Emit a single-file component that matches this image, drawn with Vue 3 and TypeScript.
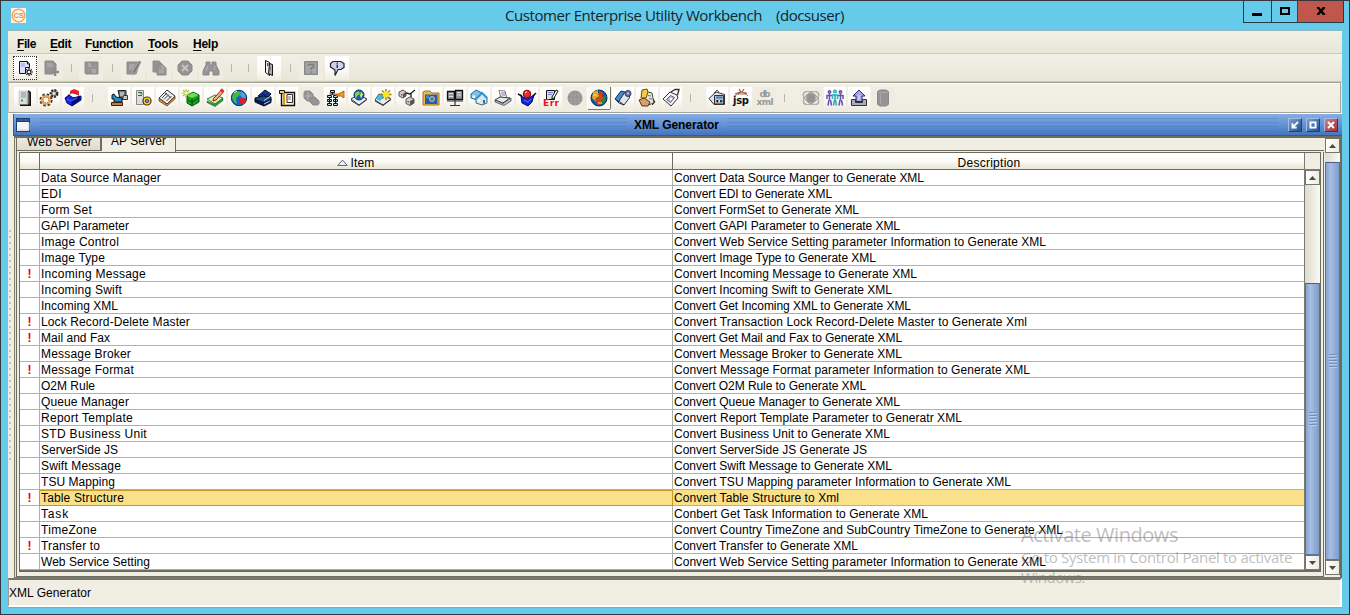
<script setup lang="ts">
interface Row { item: string; iw: number; desc: string; dw: number; flag?: boolean; selected?: boolean }
interface Tool { icon?: string; sep?: number; off?: boolean; pressed?: boolean; focus?: boolean; gap?: number }

// Spreads the letters of an element so that its text takes the given width.
const vFit = {
  mounted(el: HTMLElement, binding: { value: number }) {
    const natural = el.getBoundingClientRect().width
    const count = (el.textContent ?? '').length
    if (count) el.style.letterSpacing = `${((binding.value - natural) / count).toFixed(3)}px`
  },
}

const caption = 'Customer Enterprise Utility Workbench\u00a0\u00a0\u00a0\u00a0(docsuser)'

const r = (item: string, iw: number, desc: string, dw: number, flag = false, selected = false): Row =>
  ({ item, iw, desc, dw, flag, selected })

const rows: Row[] = [
  r('Data Source Manager', 120, 'Convert Data Source Manger to Generate XML', 250),
  r('EDI', 21, 'Convert EDI to Generate XML', 158),
  r('Form Set', 51, 'Convert FormSet to Generate XML', 185),
  r('GAPI Parameter', 88, 'Convert GAPI Parameter to Generate XML', 226),
  r('Image Control', 78, 'Convert Web Service Setting parameter Information to Generate XML', 372),
  r('Image Type', 64, 'Convert Image Type to Generate XML', 202),
  r('Incoming Message', 105, 'Convert Incoming Message to Generate XML', 243, true),
  r('Incoming Swift', 81, 'Convert Incoming Swift to Generate XML', 218),
  r('Incoming XML', 77, 'Convert Get Incoming XML to Generate XML', 237),
  r('Lock Record-Delete Master', 149, 'Convert Transaction Lock Record-Delete Master to Generate Xml', 353, true),
  r('Mail and Fax', 69, 'Convert Get Mail and Fax to Generate XML', 228, true),
  r('Message Broker', 90, 'Convert Message Broker to Generate XML', 228),
  r('Message Format', 93, 'Convert Message Format parameter Information to Generate XML', 356, true),
  r('O2M Rule', 54, 'Convert O2M Rule to Generate XML', 192),
  r('Queue Manager', 88, 'Convert Queue Manager to Generate XML', 226),
  r('Report Template', 92, 'Convert Report Template Parameter to Generatr XML', 288),
  r('STD Business Unit', 106, 'Convert Business Unit to Generate XML', 216),
  r('ServerSide JS', 77, 'Convert ServerSide JS Generate JS', 193),
  r('Swift Message', 80, 'Convert Swift Message to Generate XML', 218),
  r('TSU Mapping', 74, 'Convert TSU Mapping parameter Information to Generate XML', 337),
  r('Table Structure', 83, 'Convert Table Structure to Xml', 165, true, true),
  r('Task', 28, 'Conbert Get Task Information to Generate XML', 254),
  r('TimeZone', 56, 'Convert Country TimeZone and SubCountry TimeZone to Generate XML', 389),
  r('Transfer to', 59, 'Convert Transfer to Generate XML', 184, true),
  r('Web Service Setting', 109, 'Convert Web Service Setting parameter Information to Generate XML', 372),
]

const menus = [
  { a: '', k: 'F', b: 'ile', w: 19 },
  { a: '', k: 'E', b: 'dit', w: 21 },
  { a: 'F', k: 'u', b: 'nction', w: 48 },
  { a: '', k: 'T', b: 'ools', w: 30 },
  { a: '', k: 'H', b: 'elp', w: 25 },
]

const icons: Record<string, string> = {
  newDoc: '<path d="M5.500 4.500h8l2 2v4h-4v6h-6z" fill="#dfe0fb" stroke="#111"/><path d="M13.500 4.500v2.500h2" fill="#fff" stroke="#111"/><path d="M7 6h4v4H7z" fill="#b9baf0"/><path d="M15 11v8M11 15h8M12.300 12.300l5.500 5.500M17.800 12.300l-5.500 5.500" stroke="#111" stroke-width="1.200" fill="none"/><circle cx="15" cy="15" r="1.200" fill="#fff"/>',
  addDoc: '<path d="M5 4h8l3 3v6h-3v4H5z"/><path d="M15 11v8M11 15h8" stroke-width="2.500"/><path d="M7 7h5M7 9h6" class="l"/>',
  save: '<path d="M5 5h13v12H6l-1-1z"/><path d="M8 6h7v4H8zM8 12h8v4H8z" fill="#aaa"/><path d="M12 6h2v3h-2zM9 13h2v3H9z"/>',
  edit: '<path d="M5 5h12v3l-3 9H5z"/><path d="M17 4l2 1-6 11-3 2 1-4z" fill="#777" stroke="#aaa"/><path d="M7 8h6M7 10h5M7 12h4" class="l"/>',
  copy: '<path d="M5 4h6l3 3v8H5z" stroke="#777"/><path d="M9 7h5l4 4v7H9z" stroke="#777"/><path d="M14 8v3h3M11 13h5M11 15h5" class="l"/>',
  cancel: '<path d="M8 4h6l4 4v6l-4 4H8l-4-4V8z"/><path d="M8 8l6 6M14 8l-6 6" stroke="#c4c4c0" stroke-width="2" fill="none"/>',
  find: '<path d="M6 8V5h4v3h2V5h4v3l3 6v4h-6v-4h-4v4H3v-4z" stroke="#858585"/><path d="M6 14l2-5M14 13l1-4" class="l"/>',
  exit: '<path d="M7.500 3.500l4 2v13l-4-3z" fill="#eee" stroke="#111"/><path d="M11.500 6.500l3 1v11l-4-2z" fill="#aaa" stroke="#111"/><path d="M9 6h1.500v3H9z" fill="#555"/><path d="M11 10h1.500v3H11z" fill="#c22"/>',
  help: '<path d="M4.500 4.500h13v13h-13z" fill="#999" stroke="#888"/><path d="M6 6h10v10H6z" fill="#a6a6a6"/><path d="M8.500 9V7.500h5V10L11 11.500V13M11 14.500V16" fill="none" stroke="#7d7d7d" stroke-width="1.500"/>',
  about: '<path d="M7 4.500h8l3 2v4l-3 2h-3l-3 6v-5.500L4.500 10V6.500z" fill="#cfd1ef" stroke="#222" stroke-width="1.200"/><path d="M10.500 5.500h1.500v1.200h-1.500zM10.500 7.500H12V11h-1.500z" fill="#345"/>',

  server: '<path d="M5 4h8v14H5z" fill="#dedede" stroke="#bbb" stroke-width=".6"/><path d="M14 3l3 2v14H6v-1.500h8z" fill="#111"/><path d="M13.500 4l2 1.500v11l-2 1.500z" fill="#666"/><path d="M7 6h5M7 8h5M7 10h5" stroke="#8d8d8d"/><path d="M7 12.500h2v2H7z" fill="#1b3"/>',
  gears: '<circle cx="8" cy="13" r="4.600" fill="none" stroke="#5b3514" stroke-width="4" stroke-dasharray="2.100 1.510"/><circle cx="8" cy="13" r="4" fill="none" stroke="#e9a652" stroke-width="2.200"/><circle cx="16" cy="6.500" r="3.200" fill="#aaa" stroke="#333" stroke-width="2.500" stroke-dasharray="2 1"/><circle cx="16" cy="6.500" r="1.200" fill="#eee"/>',
  blueBox: '<path d="M8 4l4-2 5 2v4l-3 2-6-3z" fill="#ed1f24"/><path d="M6 8l4-2 7 2-2 3-5-1z" fill="#fff" stroke="#333" stroke-width=".5"/><path d="M3 11l4-3 4 3 4-1 4-1v4l-9 6-5-3z" fill="#1726e5" stroke="#030c60"/><path d="M9.500 13.500L18 9v4l-8.500 6z" fill="#030b77"/><path d="M5 12l4 2 6-3" stroke="#4f6cff" fill="none"/>',
  desk: '<path d="M10 3.500h8v8h-6z" fill="#6e7478" stroke="#222"/><path d="M12 5h4v4h-4z" fill="#aeb7b9"/><path d="M15.500 8.500h4v4h-5z" fill="#ccc" stroke="#333"/><path d="M4 8l2-1 2 3 6 1v4H6v-3H4z" fill="#258bc1" stroke="#112"/><path d="M3.500 15.500h11v3h-11z" fill="#c17e43" stroke="#3f200c"/>',
  serverCog: '<path d="M4.500 3.500h7v14h-7z" fill="#dcdcdc" stroke="#888"/><path d="M6 5.500h4M6 8.500h4" stroke="#555"/><path d="M8.500 6h2v1.500h-2z" fill="#0c3"/><circle cx="15" cy="14" r="4" fill="#ffe925" stroke="#55220a" stroke-width="1.200"/><circle cx="15" cy="14" r="1.800" fill="#fff" stroke="#335"/><path d="M14.500 13h1v2h-1z" fill="#11a"/>',
  papers: '<path d="M3 11l8-8 8 6-8 8z" fill="#eee" stroke="#333"/><path d="M3 11.500l8 6 8-8V12l-8 7-8-5z" fill="#e9a13d" stroke="#5b4327" stroke-width=".8"/><path d="M6 11l5-5M8 12.500l5-5M10.500 14l5-5M9 6l6 5" stroke="#4c4c4c"/>',
  greenCube: '<path d="M7 9l6-4 6 3v7l-7 4-5-3z" fill="#14a51b" stroke="#034c16"/><path d="M7.500 9L13 5.500 18.500 8 12 11z" fill="#6be057"/><path d="M12 11.500v7M8 13l4 2 7-4" stroke="#034c16" fill="none"/><path d="M6 2v9M1.500 6h9M3 3l6 6M9 3L3 9" stroke="#a9c926" stroke-width="1.200"/><circle cx="6" cy="6" r="1.500" fill="#fff"/>',
  greenPad: '<path d="M3 12l8-4 8 3-8 6z" fill="#d1efbb" stroke="#487b32"/><path d="M3 14l8 3.500 8-6v2l-8 6-8-4z" fill="#2ba235" stroke="#1a5c20" stroke-width=".6"/><path d="M9.500 11.500L17 3.500l2 2-7 7.500-3 1z" fill="#f3b077" stroke="#aa1818"/><path d="M16 3l2-1.500 2.500 2.500-2 2z" fill="#e6242c"/>',
  globe: '<circle cx="11" cy="11" r="7.700" fill="#1262c9" stroke="#063676"/><path d="M5 7l4-3 4 1-2 4-3 2 1 6-3-2-2-4z" fill="#42b947"/><path d="M13 4l4 3 1 4-3 1-3-4z" fill="#4f9fe2"/><circle cx="14.500" cy="14" r="3.200" fill="#d92127"/><path d="M6 6l3-2" stroke="#e4ed9d"/>',
  books: '<path d="M6 9l7-6 6 4-6 6z" fill="#18358d" stroke="#040c36"/><path d="M3 11l8-2 8 1v3l-7 3-9-3z" fill="#1f4b86" stroke="#041028"/><path d="M3 12.500l9 3.500 7-4v3.500L12 19l-9-4z" fill="#0a1d5c" stroke="#020927"/><path d="M12 13.500l6-4M12 17l6-3" stroke="#bcd1ed" fill="none"/><path d="M10 6l5 4" stroke="#0a1644"/>',
  ledger: '<path d="M5.500 5.500h13v13h-13z" fill="#fff4c6" stroke="#111" stroke-width="1.400"/><path d="M3.500 3.500h5v3h-5z" fill="#eed66a" stroke="#111"/><path d="M7 6h2v12H7z" fill="#d89a18"/><path d="M11 7.500h5.500v8H11z" fill="#fff" stroke="#333"/><path d="M12 10h3M12 12h3" stroke="#777"/>',
  link: '<path d="M5 4h5l3 3v5l-3 2H7l-3-3V6z" stroke="#858585"/><path d="M12 10h3l4 4v3l-2 1h-4l-3-3v-4z" stroke="#858585"/><path d="M8 5v8M5 9h7" class="l"/>',
  tree: '<path d="M6.500 3.500h4v2h-4zM3.500 8.500h4v2h-4zM9.500 8.500h4v2h-4zM3.500 12.500h4v2h-4zM9.500 12.500h4v2h-4zM3.500 16.500h4v2h-4zM9.500 16.500h4v2h-4z" fill="#b4e0de" stroke="#111"/><path d="M8.500 6v2M5.500 7h6M5.500 10v7M11.500 10v7" stroke="#111" fill="none"/><path d="M12 7h3l1-1 4-2v7l-3-2h-5z" fill="#f29a22" stroke="#a54d08" stroke-width=".8"/>',
  globePad: '<path d="M3 12l5-3 7 1 4 2-8 6z" fill="#edf0ef" stroke="#334"/><path d="M3 13.500l8 5 8-6" stroke="#345" fill="none"/><circle cx="11" cy="8" r="5" fill="#1b60c5" stroke="#0a355e"/><path d="M7 6l4-2 1 3-3 2-1 3-1-2z" fill="#7bd33d"/><path d="M13 4.500l2 3-2 4-1-3z" fill="#e6e04c"/>',
  starPad: '<path d="M3 13l4-6 12 5-8 6z" fill="#e8ebed" stroke="#345"/><path d="M4 12l5-6 4 3-5 5z" fill="#45b9ea"/><path d="M3 14l8 4.500 8-6" stroke="#334" fill="none"/><path d="M14 2v11M8.500 7.500h11M10 3.500l8 8M18 3.500l-8 8" stroke="#8a7c00" stroke-width="1.300"/><circle cx="14" cy="7.500" r="3.200" fill="#ffe424"/>',
  boxes: '<path d="M3 5l4-2 3 2v4L7 11 3 9zM10 12l4-2 4 2v4l-4 2.500-4-2z" fill="#ccc" stroke="#555"/><path d="M10 6l4 1 5-4M15 6v4" stroke="#222" fill="none" stroke-width="1.300"/><path d="M7 7l3-2v4l-3 2zM14 14l4-2v4l-4 2.500z" fill="#555"/><path d="M5 7h1.500v1.500H5zM11.500 14H13v1.500h-1.500z" fill="#e32"/>',
  folder: '<path d="M3 7V5l2-1h5l2 2h7v12H3z" fill="#edb94c" stroke="#a6701c"/><path d="M5 7.500h12.500V17H5z" fill="#235fae"/><path d="M6 8.500h3v3H6z" fill="#4989c9"/><circle cx="12" cy="12" r="2.400" fill="#3975bd" stroke="#f1d675"/>',
  monitors: '<path d="M3.500 4.500h7v8h-7zM11.500 3.500h7v9h-7z" fill="#999" stroke="#111" stroke-width="1.300"/><path d="M5 6.500h4M5 9.500h4M13 5.500h4M13 8h4" stroke="#ddd"/><path d="M3 14h16M11 12v6M6 18.500h10" stroke="#333" stroke-width="1.200"/>',
  houses: '<path d="M3 7l5-4 6 3v4l-5 3-6-2z" fill="#7fc3ea" stroke="#29699b"/><path d="M8 12l6-6 5 4v6l-5 2-6-2z" fill="#d6e7f0" stroke="#416882"/><path d="M8 12l6-6 5 5" stroke="#3296d0" stroke-width="2" fill="none"/><path d="M4.500 8.500h2.500V11H4.500zM10 12.500h2v2h-2z" fill="#fff"/><path d="M15 13h2v3.500h-2z" fill="#38697f"/>',
  printer: '<path d="M7 3.500l6 .5 2 8-6-1z" fill="#fff" stroke="#777"/><path d="M3 13l5-3 10 1-7 5z" fill="#e7e7f2" stroke="#333"/><path d="M3 13l8 3.500 8-5.500v3l-7 4.500L3 15z" fill="#c4c4d0" stroke="#333" stroke-width=".7"/><path d="M9 6h4M9.500 8h4" stroke="#7b70b0"/>',
  ballBox: '<path d="M5 9l6 3 7-4-2 7-4 4-6-3z" fill="#1427cf" stroke="#050d66"/><path d="M2 7l4 2M17 9l3-3" stroke="#111" stroke-width="1.500"/><circle cx="11" cy="7" r="3.800" fill="#ed2929" stroke="#78070a"/><path d="M9 6l2-1.500" stroke="#fff"/><path d="M8 13l4 2 3-3" stroke="#597bff" fill="none"/>',
  err: '<path d="M6.500 3.500h8v9h-8z" fill="#ddd" stroke="#111"/><path d="M8 5.500h5M8 7.500h4" stroke="#7682ce"/><path d="M12 10l4-7 2 1-4 7-2 1z" fill="#fff" stroke="#111"/>',
  disc: '<circle cx="11" cy="11" r="7.500"/><path d="M7 5v12M11 4v14M15 5v12M4 8h14M4 12h14M5 15h12" class="l" opacity=".35"/>',
  xmlGlobe: '<circle cx="11" cy="11" r="8" fill="#1258ac" stroke="#092f60"/><path d="M5 5l5-2v3l4 1-2 5-3-2-1 5-4-4z" fill="#e7a719"/><path d="M12 4l4 3-4 3-2-3z" fill="#d33b1a"/><path d="M14 10l4-1-1 6-4 3-2-3z" fill="#27872f"/><path d="M8 11l5-3 3 3-3 2 1 3-4 2-3-5z" fill="#c94a18"/><path d="M10 16h4M5 8h4" stroke="#ffe05a"/>',
  tape: '<path d="M3 12l6-8 4 1-6 10z" fill="#3d8ccc" stroke="#102a46"/><path d="M7 14l6-9 5 5-6 8z" fill="#dfe6ee" stroke="#334"/><circle cx="16" cy="6.500" r="3" fill="#6575ad" stroke="#343960"/><circle cx="16" cy="6.500" r="1" fill="#c8d0ee"/><path d="M3 12l4 4 5 2" stroke="#102a46" fill="none"/>',
  handDoc: '<path d="M8 4l8 2 2 10-6 2-4-6z" fill="#e5e5dc" stroke="#4b4b34"/><path d="M6 3l5-1 1 3-2 6H5z" fill="#f3cf3c" stroke="#684e12"/><path d="M3 13l5-2 6 4-2 4H6z" fill="#d9a06c" stroke="#57331b"/><path d="M12 8.500l3 .5M13 11.500l3 .5" stroke="#777"/><path d="M17 12l2 3-3 3" stroke="#222" fill="none"/>',
  tag: '<path d="M3 12l7-7 7 3 1 3-7 8z" fill="#f4f4fb" stroke="#333"/><path d="M11 5l4-2.500h4L17.500 8" fill="none" stroke="#333" stroke-width="1.300"/><path d="M6.500 12.500l4-4 4 2-4 5z" fill="#b8b9dc" stroke="#667"/><circle cx="11" cy="12" r="1.200" fill="#fff"/>',
  webHouse: '<path d="M3 11.500L10 5l8.500 2.500v10H8z" fill="#dfe5ea" stroke="#333"/><path d="M8.500 8.500h9v8.500h-9z" fill="#b7c3ce" stroke="#333"/><path d="M10 9.500h6.500v2H10z" fill="#387ed0"/><path d="M10 14h6.500M11.500 13v2.500M15 13v2.500" stroke="#111" stroke-width="1.200"/><path d="M12.500 13H14v2h-1.500z" fill="#ffe349"/><path d="M8 6l3-3 2 2" stroke="#555" fill="none"/>',
  jsp: '<path d="M9 2l2 3-3 2M14 2l-2 3 4 2M5 7l5-2 7 1" stroke="#a8584c" fill="none" stroke-width="1.200"/><path d="M4 9l4-2h8l2 2" fill="none" stroke="#977"/>',
  dbxml: '',
  atom: '<circle cx="11" cy="11" r="4.800"/><ellipse cx="11" cy="11" rx="9" ry="5" transform="rotate(35 11 11)" fill="none" stroke="#9b9b98"/><ellipse cx="11" cy="11" rx="9" ry="5" transform="rotate(-35 11 11)" fill="none" stroke="#9b9b98"/><rect x="3.500" y="4.500" width="15" height="13" rx="4" fill="none" stroke="#b4b4ae"/>',
  people: '<g fill="none" stroke="#6650b0" stroke-width="1.500"><circle cx="5.500" cy="5" r="1.200"/><path d="M5.500 7v6M3 12V8.500h5M5 13l-1 5.500M6.500 13l1 5.500"/><circle cx="16.500" cy="5" r="1.200"/><path d="M16.500 7v6M19 12V8.500h-5M16 13l-1 5.500M17.500 13l1 5.500"/></g><g fill="none" stroke="#35aebb" stroke-width="1.600"><circle cx="11" cy="4.500" r="1.300"/><path d="M11 7v6M8.500 12V8h5v4M10.500 13l-1 5.500M11.500 13l1 5.500"/></g>',
  upload: '<path d="M3.500 12.500h4v3h7v-3h4v6h-15z" fill="#a8adbb" stroke="#333"/><path d="M11 3l6 6h-3v5.500H8V9H5z" fill="#a6a7e9" stroke="#292966"/><path d="M10 8h2v5h-2z" fill="#c8c8fa"/>',
  can: '<path d="M5.500 4.500L8 3h6l2.500 1.500v13L14 19H8l-2.500-1.500z" stroke="#858585"/><path d="M6.500 5.500h9M8.500 7v10" class="l" opacity=".6"/>',
}

const t = (icon: string, opts: Partial<Tool> = {}): Tool => ({ icon, ...opts })
const topTools: Tool[] = [
  t('newDoc', { focus: true }), t('addDoc', { off: true, gap: 2 }), { sep: 16 }, t('save', { off: true }), { sep: 18 },
  t('edit', { off: true }), t('copy', { off: true, gap: 2 }), t('cancel', { off: true, gap: 2 }), t('find', { off: true, gap: 2 }),
  { sep: 16 }, { sep: 18 }, t('exit'), { sep: 18 }, t('help', { off: true }), t('about', { gap: 2 }),
]
const mainTools: Tool[] = [
  ...['server', 'gears', 'blueBox'].map((n) => t(n)), { sep: 20 },
  ...['desk', 'serverCog', 'papers', 'greenCube', 'greenPad', 'globe', 'books', 'ledger'].map((n) => t(n)),
  t('link', { off: true }),
  ...['tree', 'globePad', 'starPad', 'boxes', 'folder', 'monitors', 'houses', 'printer', 'ballBox', 'err'].map((n) => t(n)),
  t('disc', { off: true }), t('xmlGlobe', { pressed: true }), t('tape'), t('handDoc'), t('tag'), { sep: 20 },
  t('webHouse'), t('jsp'), t('dbxml', { off: true }), { sep: 20 },
  t('atom', { off: true }), t('people'), t('upload'), t('can', { off: true }),
]
</script>

<template>
  <div class="window">
    <header class="title">
      <svg class="logo" viewBox="0 0 15 15"><rect width="15" height="15" fill="#fdf3e4"/><circle cx="7.500" cy="7.500" r="6.300" fill="#fff6e9" stroke="#f2a55f" stroke-width="1.500"/><text x="7.600" y="10.200" text-anchor="middle" font-size="7.500" font-weight="bold" fill="#ee8b38">CS</text></svg>
      <div class="caption"><span v-fit="339">{{ caption }}</span></div>
      <div class="controls">
        <div class="ctl min"><svg viewBox="0 0 10 10"><path d="M0 6h10v3H0z"/></svg></div>
        <div class="ctl max"><svg viewBox="0 0 10 8"><path d="M1 1h8v6H1z" fill="none" stroke="#000" stroke-width="2"/></svg></div>
        <div class="ctl close"><svg viewBox="0 0 10 8"><path d="M1.500 0L8.500 8M8.500 0L1.500 8" stroke="#000" stroke-width="2.400"/></svg></div>
      </div>
    </header>

    <main class="client">
      <nav class="menu">
        <span v-for="m in menus" :key="m.k" v-fit="m.w">{{ m.a }}<u>{{ m.k }}</u>{{ m.b }}</span>
      </nav>

      <div class="bar first">
        <template v-for="(tool, i) in topTools" :key="i">
          <i v-if="tool.sep" class="sep" :style="{ width: tool.sep + 'px' }"></i>
          <span v-else class="tool" :class="{ off: tool.off, focus: tool.focus, spaced: tool.gap }">
            <svg viewBox="0 0 22 22" v-html="icons[tool.icon!]"></svg>
          </span>
        </template>
      </div>

      <div class="bar second">
        <template v-for="(tool, i) in mainTools" :key="i">
          <i v-if="tool.sep" class="sep" :style="{ width: tool.sep + 'px' }"></i>
          <span v-else class="tool" :class="{ off: tool.off, pressed: tool.pressed }">
            <svg viewBox="0 0 22 22">
              <g v-html="icons[tool.icon!]"></g>
              <text v-if="tool.icon === 'jsp'" x="11" y="17" class="glyph" textLength="16">jsp</text>
              <text v-if="tool.icon === 'err'" x="11" y="19" class="glyph red-text" textLength="16">Err</text>
              <template v-if="tool.icon === 'dbxml'">
                <text x="11" y="9.500" class="glyph grey" textLength="11">db</text>
                <text x="11" y="18" class="glyph grey" textLength="17">xml</text>
              </template>
            </svg>
          </span>
        </template>
      </div>

      <div class="work">
        <div class="splitter"><i></i></div>
        <section class="frame">
          <div class="frame-title">
            <svg class="frame-icon" viewBox="0 0 14 14"><rect width="14" height="14" fill="#173d7c"/><rect x="1" y="4" width="12" height="9" fill="#f5f5f5"/><path d="M1 1h12v2H1z" fill="#355b95"/><path d="M2 12h11V5" fill="none" stroke="#c9c9c9"/></svg>
            <i class="ridge wide"></i>
            <b v-fit="85">XML Generator</b>
            <i class="ridge"></i>
            <span class="fbtn"><svg viewBox="0 0 14 14"><path d="M10.500 3.500L4.500 9.500M4 5v5h5" /></svg></span>
            <span class="fbtn"><svg viewBox="0 0 14 14"><path d="M4 4h6v6H4z" /></svg></span>
            <span class="fbtn red"><svg viewBox="0 0 14 14"><path d="M3.500 3.500l7 7M10.500 3.500l-7 7" /></svg></span>
          </div>

          <div class="frame-body">
            <div class="pane">
              <div class="tabs">
                <div class="tab"><span v-fit="65">Web Server</span></div>
                <div class="tab active"><span v-fit="55">AP Server</span></div>
                <div class="tab-rest"></div>
              </div>
              <div class="tab-page">
                <div class="grid-box">
                  <div class="table">
                    <div class="row head">
                      <div class="cell"></div>
                      <div class="cell"><svg class="sort" viewBox="0 0 11 7"><path d="M.8 6.500L5.500 1l4.700 5.500z" fill="#eef" stroke="#667" /></svg><span v-fit="24">Item</span></div>
                      <div class="cell"><span v-fit="63">Description</span></div>
                    </div>
                    <div v-for="row in rows" :key="row.item" class="row" :class="{ selected: row.selected }">
                      <div class="cell mark"><b v-if="row.flag">!</b></div>
                      <div class="cell item"><span v-fit="row.iw">{{ row.item }}</span></div>
                      <div class="cell desc"><span v-fit="row.dw">{{ row.desc }}</span></div>
                    </div>
                  </div>
                  <div class="scroll inner">
                    <div class="corner"></div>
                    <div class="arrow"><svg viewBox="0 0 7 4"><path d="M0 4L3.500 0 7 4z"/></svg></div>
                    <div class="track"></div>
                    <div class="thumb"><i></i></div>
                    <div class="arrow"><svg viewBox="0 0 7 4"><path d="M0 0h7L3.500 4z"/></svg></div>
                  </div>
                </div>
              </div>
            </div>
            <div class="scroll outer">
              <div class="arrow"><svg viewBox="0 0 7 4"><path d="M0 4L3.500 0 7 4z"/></svg></div>
              <div class="track"></div>
              <div class="thumb"><i></i></div>
              <div class="arrow"><svg viewBox="0 0 7 4"><path d="M0 0h7L3.500 4z"/></svg></div>
            </div>
          </div>
        </section>
      </div>

      <footer class="status"><span v-fit="82">XML Generator</span></footer>
    </main>

    <div class="watermark">
      <div class="big"><span v-fit="157">Activate Windows</span></div>
      <div><span v-fit="271">Go to System in Control Panel to activate</span></div>
      <div><span v-fit="64">Windows.</span></div>
    </div>
  </div>
</template>

<style>
body { margin: 0; overflow: hidden; }
</style>

<style scoped>
* { box-sizing: border-box; }
.window {
  position: relative; width: 1350px; height: 615px; padding: 0 7px 6px;
  border: 1px solid #35373a; background: #66caea; display: flex; flex-direction: column;
  font: 12px/15px "Liberation Sans", Arial, sans-serif; color: #000;
}
span, b { display: inline-block; flex: none; white-space: pre; }
svg { display: block; }

.title { height: 29px; display: flex; align-items: flex-start; }
.logo { width: 15px; height: 15px; margin: 7px 0 0 3px; }
.caption { flex: 1; padding: 4px 0 0 479px; font: 15px/21px "Open Sans", "Noto Sans", sans-serif; color: #10272e; }
.controls { display: flex; margin: -1px -2px 0 0; height: 23px; border: 1px solid #253c47; border-top-color: #35373a; }
.ctl { display: flex; align-items: center; justify-content: center; height: 21px; }
.ctl svg { width: 10px; height: 8px; margin-top: -1px; }
.min { width: 28px; border-right: 1px solid #253c47; }
.min svg { height: 10px; margin: 0 1px 0 0; }
.max { width: 26px; border-right: 1px solid #4d3d40; }
.close { width: 45px; background: #c1564c; }

.client { flex: 1; display: flex; flex-direction: column; background: #f0eee2; border-top: 1px solid #8fb4bc; border-bottom: 1px solid #9aa09c; min-height: 0; }
.menu { height: 23px; flex: none; display: flex; gap: 15px; padding: 6px 0 0 9px; font-weight: bold; background: linear-gradient(#f0f0e5, #e9e7d7); border-bottom: 1px solid #cccabf; }
.menu span:nth-child(2) { margin: 0 -1px 0 -1px; }
.menu span { height: 15px; }
.menu u { text-underline-offset: 2px; }

.bar { display: flex; flex: none; align-items: center; }
.first { height: 28px; padding-left: 5px; background: linear-gradient(#f1f1e7, #e8e6d7); border-bottom: 1px solid #c9c7ba; }
.second { height: 31px; padding: 1px 0 0 5px; gap: 2px; border: 1px solid #a5a398; border-left-color: #c9c7bb; margin-right: 1px; box-shadow: inset 0 1px #fff; background: linear-gradient(#f3f1e8, #eeecdf); }
.tool { width: 22px; height: 22px; background: linear-gradient(#fff, #fcfbf7 55%, #efede1); }
.first .tool { width: 24px; height: 24px; padding: 1px; }
.first .tool.spaced { margin-left: 2px; }
.tool.off { background: #efede2; }
.tool.off svg { fill: #949494; stroke: none; }
.tool.off :deep(path:not([fill]):not(.l)) { fill: #949494; stroke: #8a8a8a; }
.tool :deep(.l) { fill: none; stroke: #b9b9b6; }
.tool svg { width: 22px; height: 22px; }
.tool.focus { outline: 1px dotted #333; outline-offset: -1px; }
.tool.pressed { box-shadow: 1px 0 #777468, 0 1px #777468, -1px 0 #fff; background: #f8f7f0; }
.glyph { font: bold 10px "DejaVu Sans", sans-serif; text-anchor: middle; fill: #111; stroke: none; }
.glyph.grey { fill: #999; font-size: 9px; }
.glyph.red-text { fill: #f1121c; font-size: 9px; }
.sep { flex: none; height: 8px; background: linear-gradient(#b5b5aa, #b5b5aa) center / 1px 8px no-repeat; }
.second .sep { background-position: 6px 0; }

.work { flex: 1; display: flex; min-height: 0; border-top: 1px solid #fff; }
.splitter { width: 5px; flex: none; padding-top: 116px; }
.splitter i { display: block; width: 2px; height: 230px; margin-left: 1px; background: linear-gradient(#c4c2b5 2px, transparent 2px) 0 0 / 2px 6px; }
.frame { flex: 1; display: flex; flex-direction: column; min-width: 0; }
.frame-title { height: 22px; flex: none; display: flex; align-items: center; padding: 0 4px 0 2px; background: linear-gradient(#86aee4, #6592d4 50%, #4376c0); border-left: 1px solid #395e9f; border-bottom: 1px solid #375b91; }
.frame-title b { margin: 2px 8px 0 7px; }
.frame-icon { width: 14px; height: 14px; }
.ridge { flex: none; width: 551px; height: 14px; background: repeating-linear-gradient(#4a79bf70 0 1px, transparent 1px 4px); }
.ridge.wide { width: 588px; margin-left: 9px; }
.fbtn { width: 14px; height: 14px; margin-left: 4px; background: linear-gradient(135deg, #7aa1d5, #214f91); border: 1px solid; border-color: #a2bddf #22406b #22406b #a2bddf; }
.ridge + .fbtn { margin-left: auto; }
.fbtn.red { background: linear-gradient(135deg, #d08085, #9f3038); }
.fbtn svg { width: 12px; height: 12px; fill: none; stroke: #fff; stroke-width: 2.200; }

.frame-body { flex: 1; display: flex; min-height: 0; margin-left: 1px; border: 1px solid #7c7b6c; border-top: 2px solid #6d6c60; border-right: 2px solid #6c6b5f; }
.pane { flex: 1; display: flex; flex-direction: column; min-width: 0; border-left: 1px solid #e6e4d5; }
.tabs { height: 14px; flex: none; display: flex; overflow: hidden; border-left: 1px solid #6c6b5f; }
.tab { width: 85px; height: 13px; padding-left: 10px; background: linear-gradient(#eceade, #dfdccd); border-right: 2px solid #6e6c61; border-bottom: 1px solid #6e6c61; overflow: hidden; }
.tab span { display: table; margin-top: -3px; }
.tab.active { width: 74px; height: 14px; padding-left: 9px; background: #f1efe4; border-right-width: 1px; border-bottom: 0; }
.tab.active span { margin-top: -4px; }
.tab-rest { flex: 1; height: 13px; border-bottom: 1px solid #6e6c61; }
.tab-page { flex: 1; padding: 0 2px 2px; border: 1px solid #6c6b5f; border-top: 0; min-height: 0; }
.grid-box { display: flex; border: 1px solid #6c6b5f; border-bottom-width: 2px; height: 420px; background: #f1efe4; }
.table { flex: 1; min-width: 0; background: #fff; border-right: 1px solid #7c7b70; }
.row { display: grid; grid-template-columns: 20px 633px 1fr; height: 16px; }
.cell { border-right: 1px solid #b2b1a7; border-bottom: 1px solid #b2b1a7; padding-left: 1px; height: 16px; line-height: 17px; overflow: hidden; white-space: nowrap; }
.cell:last-child { border-right: 0; }
.head { height: 17px; }
.head .cell { height: 17px; display: flex; justify-content: center; align-items: center; gap: 3px; background: linear-gradient(#fff, #fbfaf4 50%, #e7e5d6); border-color: #6c6b60; padding-top: 4px; line-height: 15px; }
.sort { width: 11px; height: 7px; margin-top: -2px; margin-left: -2px; }
.mark { text-align: center; padding: 0; }
.mark b { color: #f0000b; }
.selected .item, .selected .desc { background: #fbe08a; }
.selected .item { border: 1px solid #c49a28; padding-left: 1px; line-height: 15px; margin-left: -1px; }

.scroll { width: 15px; flex: none; display: flex; flex-direction: column; }
.corner { height: 17px; flex: none; background: #f0eee3; border-bottom: 1px solid #7c7b70; }
.arrow { height: 15px; flex: none; border: 1px solid #77756b; background: linear-gradient(90deg, #fff, #eeecdf); display: flex; align-items: center; justify-content: center; }
.arrow svg { width: 7px; height: 4px; fill: #4b4a43; }
.track { flex: none; background: linear-gradient(90deg, #dedccf, #faf9f2); }
.inner .track { height: 98px; }
.outer .track { height: 9px; }
.thumb { flex: 1; border: 1px solid #58719e; border-top-color: #475e88; background: linear-gradient(90deg, #88a4d2, #a5bee4 35%, #7f9dca); display: flex; align-items: center; justify-content: center; }
.thumb i { width: 8px; height: 14px; background: repeating-linear-gradient(#7291c0 0 1px, #b9cdec 1px 2px, transparent 2px 3px); }
.outer { margin: 0 0 2px 1px; }

.status { height: 29px; flex: none; border: 1px solid #9d9b91; border-top: 2px solid #77766c; border-right: 2px solid #fff; border-bottom: 2px solid #fff; padding: 6px 0 0 0; }
.watermark { position: absolute; left: 1020px; top: 521px; font: 15px/20px "Open Sans", "Noto Sans", sans-serif; color: rgba(125, 125, 125, .5); pointer-events: none; }
.watermark .big { font-size: 20px; line-height: 25px; }
</style>
